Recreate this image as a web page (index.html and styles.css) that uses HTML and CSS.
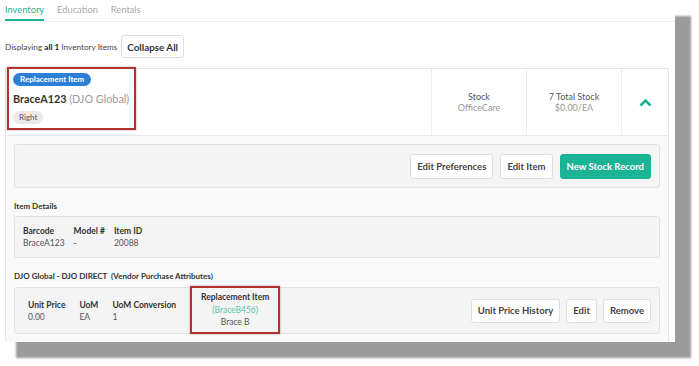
FILE: index.html
```html
<!DOCTYPE html>
<html>
<head>
<meta charset="utf-8">
<link rel="stylesheet" href="styles.css">
</head>
<body>
<div class="frame">
  <div class="tabs">
    <span class="tab active">Inventory</span>
    <span class="tab">Education</span>
    <span class="tab">Rentals</span>
  </div>
  <div class="toolbar">
    <span class="count">Displaying <b>all 1</b> Inventory Items</span>
    <button class="btn">Collapse All</button>
  </div>
  <div class="card">
    <div class="card-head">
      <div class="head-main">
        <div class="annot annot-head">
          <span class="pill pill-blue">Replacement Item</span>
          <div class="item-name">BraceA123 <span class="muted">(DJO Global)</span></div>
          <span class="pill pill-gray">Right</span>
        </div>
      </div>
      <div class="head-cell">
        <div class="cell-title">Stock</div>
        <div class="cell-sub">OfficeCare</div>
      </div>
      <div class="head-cell">
        <div class="cell-title">7 Total Stock</div>
        <div class="cell-sub">$0.00/EA</div>
      </div>
      <div class="head-toggle">
        <svg width="13" height="9" viewBox="0 0 13 9"><path d="M1.5 7.5 L6.5 2.5 L11.5 7.5" fill="none" stroke="#1ab394" stroke-width="2.6"/></svg>
      </div>
    </div>
    <div class="card-body">
      <div class="box actions">
        <button class="btn">Edit Preferences</button>
        <button class="btn">Edit Item</button>
        <button class="btn btn-primary">New Stock Record</button>
      </div>
      <div class="section-label">Item Details</div>
      <div class="box details">
        <div class="field"><div class="f-label">Barcode</div><div class="f-value">BraceA123</div></div>
        <div class="field"><div class="f-label">Model #</div><div class="f-value">-</div></div>
        <div class="field"><div class="f-label">Item ID</div><div class="f-value">20088</div></div>
      </div>
      <div class="section-label vendor-label">DJO Global - DJO DIRECT &nbsp;(Vendor Purchase Attributes)</div>
      <div class="box vendor">
        <div class="field"><div class="f-label">Unit Price</div><div class="f-value">0.00</div></div>
        <div class="field"><div class="f-label">UoM</div><div class="f-value">EA</div></div>
        <div class="field"><div class="f-label">UoM Conversion</div><div class="f-value">1</div></div>
        <div class="annot annot-repl">
          <div class="f-label">Replacement Item</div>
          <div class="link">(BraceB456)</div>
          <div class="f-value">Brace B</div>
        </div>
        <div class="vendor-actions">
          <button class="btn">Unit Price History</button>
          <button class="btn">Edit</button>
          <button class="btn">Remove</button>
        </div>
      </div>
    </div>
  </div>
</div>
</body>
</html>
```

FILE: styles.css
```css
html, body {
  margin: 0;
  padding: 0;
  background: #ffffff;
}
body {
  font-family: Lato, "Open Sans", sans-serif;
  color: #333;
  width: 699px;
  height: 366px;
  overflow: hidden;
}
.frame {
  width: 675px;
  height: 342px;
  background: #fff;
  box-shadow: 16px 16px 2px #9b9b9b;
  overflow: hidden;
  box-sizing: border-box;
  padding: 0 6px 0 5px;
}
.tabs {
  display: flex;
  gap: 13px;
  height: 22px;
  border-bottom: 1px solid #efefef;
  margin: 0 -6px 0 -5px;
  padding-left: 5px;
  box-sizing: border-box;
}
.tab {
  font-size: 9.3px;
  color: #a8a8a8;
  line-height: 20px;
  height: 21px;
  box-sizing: border-box;
}
.tab.active {
  color: #1ab394;
  border-bottom: 2px solid #1ab394;
}
.toolbar {
  display: flex;
  align-items: center;
  gap: 4px;
  margin-top: 13px;
  height: 23px;
}
.count {
  font-size: 8.2px;
  color: #444;
}
.count b { font-weight: 700; color: #222; }
.btn {
  font-family: inherit;
  font-size: 9.5px;
  font-weight: 700;
  color: #444;
  background: #fff;
  border: 1px solid #dedede;
  border-radius: 3px;
  height: 25px;
  padding: 0 6px;
  box-sizing: border-box;
}
.toolbar .btn {
  height: 23px;
  font-size: 9.8px;
  color: #333;
  padding: 0 5px;
}
.btn-primary {
  background: #1ab394;
  border-color: #1ab394;
  color: #fff;
}
.card {
  margin-top: 10px;
  border: 1px solid #e6e6e6;
  border-bottom: none;
}
.card-head {
  display: flex;
  height: 66px;
  border-bottom: 1px solid #e6e6e6;
}
.head-main {
  flex: 1;
  padding-left: 1px;
}
.annot {
  border: 2px solid #b3322d;
  box-shadow: 0 0 2px rgba(0,0,0,0.35);
  box-sizing: border-box;
}
.annot-head {
  width: 129px;
  height: 63px;
  margin-top: -2px;
  padding: 4px 0 0 4px;
  display: flex;
  flex-direction: column;
  align-items: flex-start;
}
.pill {
  font-size: 8px;
  border-radius: 8px;
  line-height: 13px;
  height: 13px;
  padding: 0 7px;
}
.pill-blue {
  background: #2c7fd6;
  color: #fff;
  font-weight: 700;
}
.pill-gray {
  background: #eaeaea;
  color: #555;
  margin-top: 5px;
  padding: 0 6px;
}
.item-name {
  font-size: 10.8px;
  font-weight: 700;
  color: #333;
  margin-top: 5px;
  line-height: 15px;
  white-space: nowrap;
}
.item-name .muted {
  color: #9a9a9a;
  font-weight: 400;
}
.head-cell {
  width: 94px;
  border-left: 1px solid #eeeeee;
  display: flex;
  flex-direction: column;
  justify-content: center;
  align-items: center;
  font-size: 9px;
  line-height: 11px;
}
.cell-title { color: #555; }
.cell-sub { color: #999; }
.head-toggle {
  width: 46px;
  border-left: 1px solid #eeeeee;
  display: flex;
  justify-content: center;
  align-items: center;
}
.card-body {
  background: #f9f9f9;
  padding: 8px 8px 10px 8px;
  height: 220px;
}
.box {
  background: #f4f4f4;
  border: 1px solid #e2e2e2;
  border-radius: 3px;
  box-sizing: border-box;
}
.actions {
  height: 44px;
  display: flex;
  justify-content: flex-end;
  align-items: center;
  gap: 7px;
  padding-right: 8px;
}
.section-label {
  font-size: 8px;
  font-weight: 700;
  color: #333;
  margin: 13px 0 5px 0;
  line-height: 10px;
}
.details {
  height: 42px;
  display: flex;
  align-items: center;
  padding-left: 8px;
  gap: 9px;
}
.field {
  display: flex;
  flex-direction: column;
  font-size: 8.5px;
  line-height: 12px;
}
.f-label {
  font-weight: 700;
  color: #333;
}
.f-value {
  color: #555;
}
.vendor-label { margin-top: 13px; margin-bottom: 6px; }
.vendor {
  height: 47px;
  display: flex;
  align-items: center;
  padding-left: 13px;
  gap: 14px;
}
.vendor .field { line-height: 12px; }
.annot-repl {
  width: 90px;
  height: 48px;
  margin: -1px 0 0 0;
  font-size: 8.5px;
  line-height: 12.5px;
  display: flex;
  flex-direction: column;
  align-items: center;
  justify-content: center;
}
.link { color: #5cc3a8; }
.vendor-actions {
  margin-left: auto;
  display: flex;
  gap: 6px;
  padding-right: 8px;
}
.vendor-actions .btn { height: 24px; padding: 0 6px; }
```
